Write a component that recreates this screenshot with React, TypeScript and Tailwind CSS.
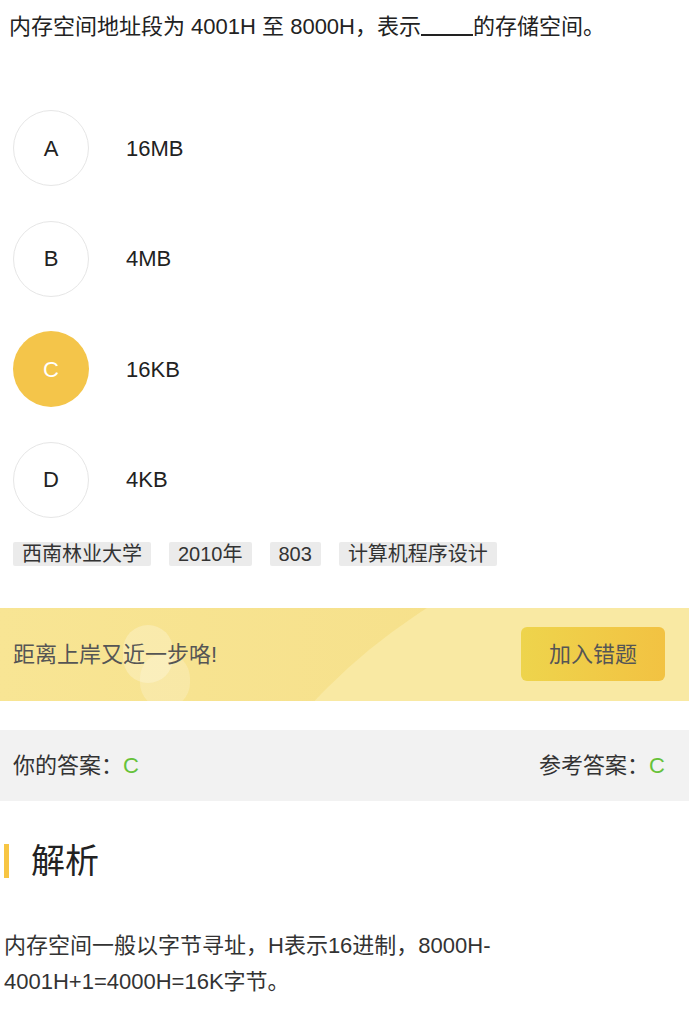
import React from 'react';

const font = "font-['Liberation_Sans','Noto_Sans_CJK_SC',sans-serif]";

const options = [
  { key: 'A', text: '16MB', picked: false },
  { key: 'B', text: '4MB', picked: false },
  { key: 'C', text: '16KB', picked: true },
  { key: 'D', text: '4KB', picked: false },
];

const tags = ['西南林业大学', '2010年', '803', '计算机程序设计'];

export default function App() {
  return (
    <div className={`w-[689px] min-h-[1024px] bg-white text-[#333] ${font}`}>
      {/* Question stem */}
      <div className="px-[9px] pt-[13px] text-[22px] leading-[28px] text-[#222]">
        内存空间地址段为 4001H 至 8000H，表示
        <span className="inline-block w-[52px] border-b-2 border-[#222] translate-y-[2px]"></span>
        的存储空间。
      </div>

      {/* Options */}
      <div className="mt-[69px] flex flex-col gap-[34.5px] pl-[13px]">
        {options.map(opt => (
          <div key={opt.key} className="flex items-center">
            <div
              className={`w-[76px] h-[76px] rounded-full flex items-center justify-center text-[22px] ${
                opt.picked ? 'bg-[#f4c54a] text-white' : 'border border-[#e6e6e6] text-[#222]'
              }`}
            >
              {opt.key}
            </div>
            <span className="ml-[37px] text-[22px] text-[#222]">{opt.text}</span>
          </div>
        ))}
      </div>

      {/* Tags */}
      <div className="mt-[24px] flex gap-[18px] pl-[13px]">
        {tags.map(t => (
          <span key={t} className="h-[24px] px-[9px] rounded-[2px] bg-[#ebebeb] text-[20px] leading-[24px] text-[#333]">
            {t}
          </span>
        ))}
      </div>

      {/* Banner */}
      <div className="relative mt-[42px] h-[93px] overflow-hidden bg-gradient-to-r from-[#f8e594] to-[#f5de86] flex items-center justify-between pl-[13px] pr-[24px]">
        <div className="absolute left-[156px] top-[-91px] w-[1168px] h-[1168px] rounded-full bg-[#f9e9a3]"></div>
        <div className="absolute left-[123px] top-[17px] w-[50px] h-[58px] rounded-full bg-white/25"></div>
        <div className="absolute left-[140px] top-[45px] w-[50px] h-[55px] rounded-full bg-white/20"></div>
        <span className="relative text-[22px] text-[#555]">距离上岸又近一步咯!</span>
        <button className="relative w-[144px] h-[54px] rounded-[6px] bg-gradient-to-r from-[#eed44c] to-[#f2c242] text-[22px] text-[#555]">
          加入错题
        </button>
      </div>

      {/* Answers */}
      <div className="mt-[29px] h-[71px] bg-[#f2f2f2] flex items-center justify-between pl-[13px] pr-[24px] text-[22px] text-[#333]">
        <span>
          你的答案：<span className="text-[#67c23a]">C</span>
        </span>
        <span>
          参考答案：<span className="text-[#67c23a]">C</span>
        </span>
      </div>

      {/* Analysis */}
      <div className="mt-[43px] flex items-center pl-[4px]">
        <div className="w-[5px] h-[34px] bg-[#f7c543]"></div>
        <span className="ml-[22px] text-[34px] leading-[34px] text-[#222]">解析</span>
      </div>
      <p className="mt-[50px] px-[4px] text-[22px] leading-[36px] text-[#333]">
        内存空间一般以字节寻址，H表示16进制，8000H-4001H+1=4000H=16K字节。
      </p>
    </div>
  );
}
